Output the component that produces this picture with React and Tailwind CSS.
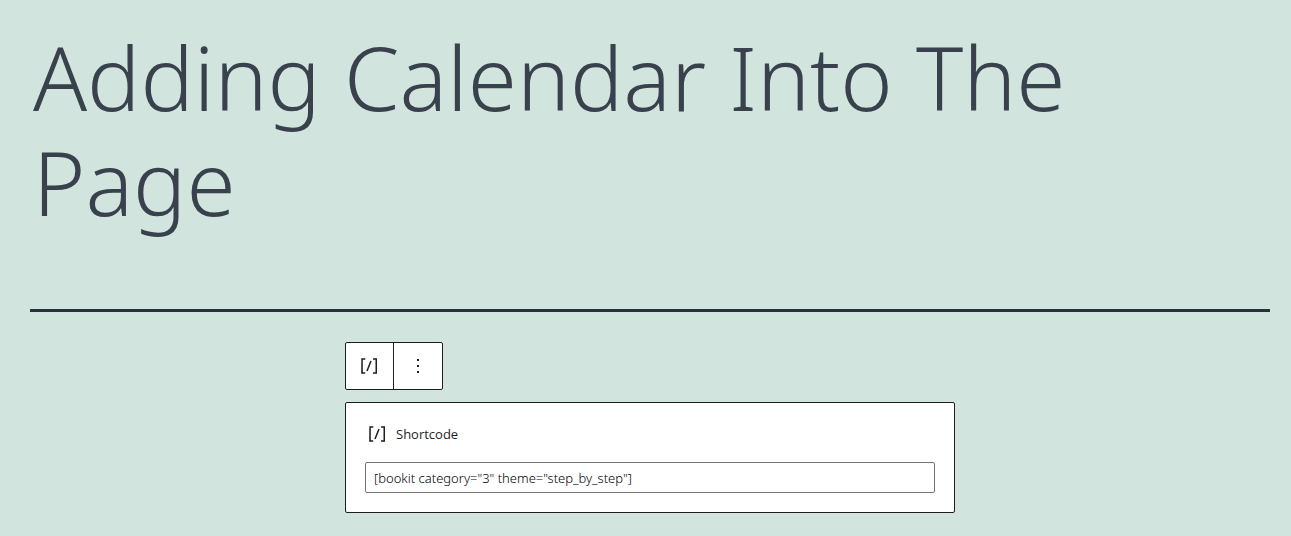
function ShortcodeIcon() {
  return (
    <svg viewBox="0 0 24 24" className="size-6 shrink-0" fill="currentColor" aria-hidden="true">
      <path d="M16 4.2v1.5h2.5v12.5H16v1.5h4V4.2h-4zM4.2 19.8h4v-1.5H5.8V5.8h2.5V4.2h-4l-.1 15.6zm5.1-3.1l1.4.6 4-10-1.4-.6-4 10z" />
    </svg>
  );
}

function MoreIcon() {
  return (
    <svg viewBox="0 0 24 24" className="size-6 shrink-0" fill="currentColor" aria-hidden="true">
      <path d="M13 19h-2v-2h2v2zm0-6h-2v-2h2v2zm0-6h-2V5h2v2z" />
    </svg>
  );
}

export default function App() {
  return (
    <main className="min-h-screen bg-[#d1e4dd] pt-6 pr-[21px] pb-6 pl-[30px] font-['Open_Sans','Noto_Sans',sans-serif] text-[#1e1e1e]">
      <header className="border-b-3 border-[#28303d] pb-[75px]">
        <h1 className="pl-[3px] font-['Noto_Sans','Open_Sans',sans-serif] text-[89px] leading-[105px] font-light text-[#39414d]">
          Adding Calendar Into The Page
        </h1>
      </header>
      <section className="mx-auto mt-[30px] flex w-full max-w-[610px] flex-col items-start gap-3">
        <div role="toolbar" aria-label="Block tools" className="flex h-12 rounded-xs border border-[#1e1e1e] bg-white">
          <button type="button" aria-label="Shortcode" className="flex w-12 items-center border-r border-[#1e1e1e] pl-[11px]">
            <ShortcodeIcon />
          </button>
          <button type="button" aria-label="Options" className="flex w-12 items-center justify-center">
            <MoreIcon />
          </button>
        </div>
        <div className="flex w-full flex-col gap-4 rounded-xs border border-[#1e1e1e] bg-white p-[19px]">
          <label htmlFor="shortcode" className="flex items-center gap-[7px] text-[13px] leading-6 font-medium">
            <ShortcodeIcon />
            Shortcode
          </label>
          <input
            id="shortcode"
            type="text"
            defaultValue={'[bookit category="3" theme="step_by_step"]'}
            className="h-[31px] w-full rounded-xs border border-[#757575] bg-white px-2 font-['Noto_Sans','Open_Sans',sans-serif] text-[13px] font-light text-black"
          />
        </div>
      </section>
    </main>
  );
}
